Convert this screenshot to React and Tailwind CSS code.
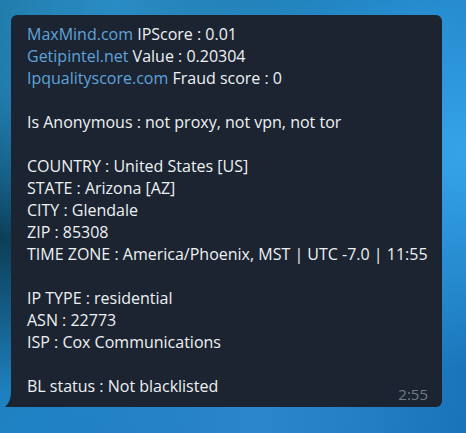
export default function App() {
  const link = "text-[#5fa3dc]";
  return (
    <div
      className="w-[466px] h-[433px] overflow-hidden pt-[15px] pl-[11px] bg-[radial-gradient(ellipse_at_25%_0%,#2a8cc4_0%,transparent_45%),radial-gradient(ellipse_at_100%_35%,#35a3e8_0%,transparent_55%),radial-gradient(ellipse_at_0%_55%,#0b3f58_0%,transparent_45%),radial-gradient(ellipse_at_55%_100%,#2c86cc_0%,transparent_60%),linear-gradient(135deg,#1a6f95_0%,#1f82c4_50%,#1872b8_100%)]"
      style={{ fontFamily: '"Open Sans", "Noto Sans", sans-serif' }}
    >
      <div className="relative w-[431px] h-[392px] bg-[#1b2430] rounded-t-[6px] rounded-br-[6px] pl-[16px] pr-[14px] pt-[8px] text-[16px] leading-[22px] text-[#eef1f4]">
        <svg
          className="absolute left-[-6px] bottom-0"
          width="6"
          height="16"
          viewBox="0 0 6 16"
        >
          <path d="M6 0 C6 8 4 12 0 16 H6 Z" fill="#1b2430" />
        </svg>
        <div><span className={link}>MaxMind.com</span> IPScore : 0.01</div>
        <div><span className={link}>Getipintel.net</span> Value : 0.20304</div>
        <div><span className={link}>Ipqualityscore.com</span> Fraud score : 0</div>
        <div className="h-[22px]" />
        <div>Is Anonymous : not proxy, not vpn, not tor</div>
        <div className="h-[22px]" />
        <div>COUNTRY : United States [US]</div>
        <div>STATE : Arizona [AZ]</div>
        <div>CITY : Glendale</div>
        <div>ZIP : 85308</div>
        <div>TIME ZONE : America/Phoenix, MST | UTC -7.0 | 11:55</div>
        <div className="h-[22px]" />
        <div>IP TYPE : residential</div>
        <div>ASN : 22773</div>
        <div>ISP : Cox Communications</div>
        <div className="h-[22px]" />
        <div className="flex justify-between items-start">
          <span>BL status : Not blacklisted</span>
          <span className="text-[15px] text-[#6f7c88] mt-[8px]">2:55</span>
        </div>
      </div>
    </div>
  );
}
